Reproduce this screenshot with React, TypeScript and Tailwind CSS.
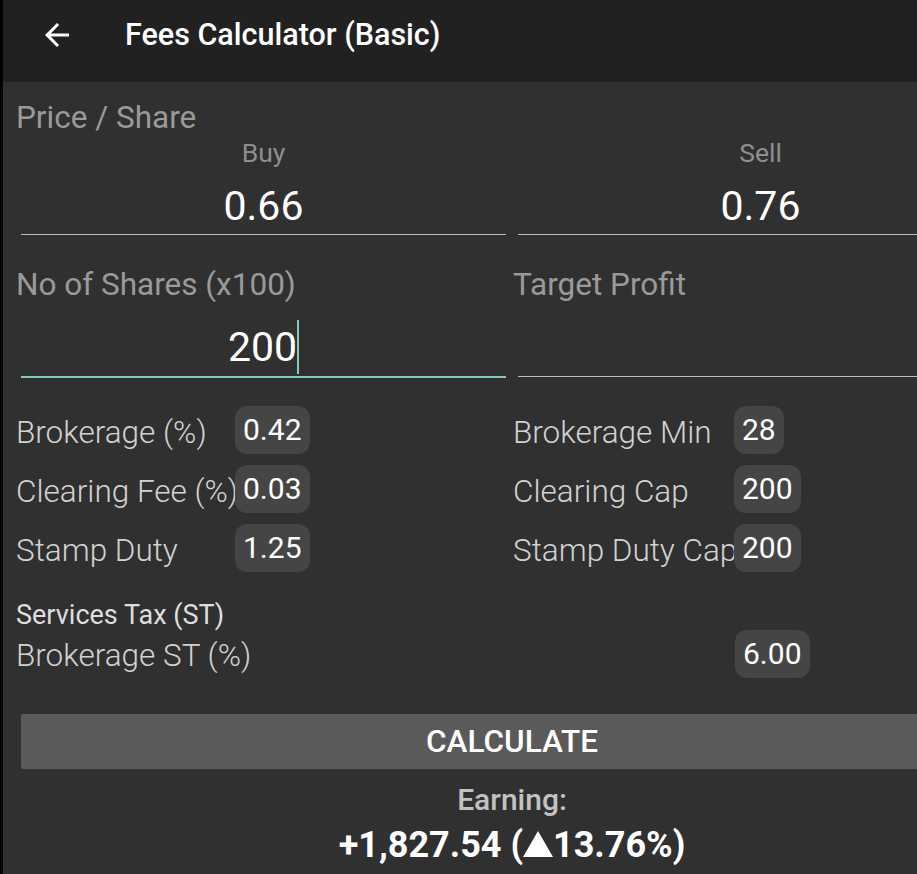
import React from 'react';

const Chip = ({ value }: { value: string }) => (
  <span className="inline-flex h-[48px] items-center rounded-[12px] bg-[#454545] px-[8px] text-[30px] leading-none text-white">
    {value}
  </span>
);

const FeeRow = ({ label, value, wide }: { label: string; value: string; wide?: boolean }) => (
  <div className="flex h-[48px] items-center">
    <span
      className={
        (wide ? 'w-[221px] ' : 'w-[219px] ') +
        'shrink-0 whitespace-nowrap pt-[6px] text-[31.5px] font-light text-[#d2d2d2]'
      }
    >
      {label}
    </span>
    <Chip value={value} />
  </div>
);

const PriceField = ({ label, value }: { label: string; value: string }) => (
  <div className="mt-[3px] ml-[5px] w-[485px] border-b border-[#bdbdbd] pb-[6px] text-center">
    <div className="text-[26.5px] leading-[30px] text-[#8e8e8e]">{label}</div>
    <div className="mt-[16px] text-[41px] leading-[44px] text-white">{value}</div>
  </div>
);

const App = () => {
  const left = [
    { label: 'Brokerage (%)', value: '0.42' },
    { label: 'Clearing Fee (%)', value: '0.03' },
    { label: 'Stamp Duty', value: '1.25' },
  ];
  const right = [
    { label: 'Brokerage Min', value: '28' },
    { label: 'Clearing Cap', value: '200' },
    { label: 'Stamp Duty Cap', value: '200' },
  ];

  return (
    <div className="flex h-[874px] w-[917px] overflow-hidden bg-black font-['Roboto',sans-serif]">
      <div className="ml-[3px] flex w-[1024px] shrink-0 flex-col bg-[#303030]">
        {/* toolbar */}
        <header className="flex h-[82px] shrink-0 items-center bg-[#212121] pb-[12px]">
          <svg viewBox="0 0 24 24" className="ml-[36px] h-[36px] w-[36px] fill-white">
            <path d="M20 11H7.83l5.59-5.59L12 4l-8 8 8 8 1.41-1.41L7.83 13H20v-2z" />
          </svg>
          <h1 className="ml-[50px] text-[30.5px] font-medium text-white">Fees Calculator (Basic)</h1>
        </header>

        <main className="shrink-0 pl-[13px]">
          <div className="pt-[19px] text-[31.5px] leading-[34px] text-[#9a9a9a]">Price / Share</div>
          <div className="grid grid-cols-[497px_497px]">
            <PriceField label="Buy" value="0.66" />
            <PriceField label="Sell" value="0.76" />
          </div>

          <div className="mt-[33px] grid grid-cols-[497px_497px]">
            <div>
              <div className="text-[31.5px] leading-[34px] text-[#9a9a9a]">No of Shares (x100)</div>
              <div className="mt-[25px] ml-[5px] w-[485px] border-b-2 border-[#80cbc4] pb-[9px]">
                <div className="flex h-[40px] items-center justify-center">
                  <span className="text-[41px] leading-[40px] text-white">200</span>
                  <span className="h-[54px] w-[2px] shrink-0 bg-[#80cbc4]" />
                </div>
              </div>
            </div>
            <div>
              <div className="text-[31.5px] leading-[34px] text-[#9a9a9a]">Target Profit</div>
              <div className="mt-[25px] ml-[5px] h-[50px] w-[485px] border-b border-[#bdbdbd]" />
            </div>
          </div>

          <div className="mt-[28px] grid grid-cols-[497px_497px]">
            <div className="flex flex-col gap-[11px]">
              {left.map((r) => (
                <FeeRow key={r.label} label={r.label} value={r.value} />
              ))}
            </div>
            <div className="flex flex-col gap-[11px]">
              {right.map((r) => (
                <FeeRow key={r.label} label={r.label} value={r.value} wide />
              ))}
            </div>
          </div>

          <div className="mt-[28px] text-[27px] leading-[30px] text-[#dedede]">Services Tax (ST)</div>
          <div className="grid grid-cols-[497px_497px]">
            <div className="flex h-[48px] items-center pt-[4px] text-[31.5px] font-light text-[#d2d2d2]">Brokerage ST (%)</div>
            <div className="flex h-[48px] items-center pl-[222px]">
              <Chip value="6.00" />
            </div>
          </div>

          <button className="mt-[36px] ml-[5px] flex h-[55px] w-[982px] items-center justify-center rounded-[2px] bg-[#5a5a5a] text-[31.5px] font-medium text-white">
            CALCULATE
          </button>

          <div className="ml-[5px] w-[982px] text-center">
            <div className="mt-[15px] text-[30px] font-medium leading-[32px] text-[#c2c2c2]">Earning:</div>
            <div className="mt-[9px] flex items-center justify-center text-[36px] font-bold leading-[40px] text-white">
              <span>+1,827.54 (</span>
              <svg viewBox="0 0 30 26" className="mb-[2px] h-[26px] w-[30px] fill-white">
                <path d="M15 0 L30 26 L0 26 Z" />
              </svg>
              <span>13.76%)</span>
            </div>
          </div>
        </main>
      </div>
    </div>
  );
};

export default App;
